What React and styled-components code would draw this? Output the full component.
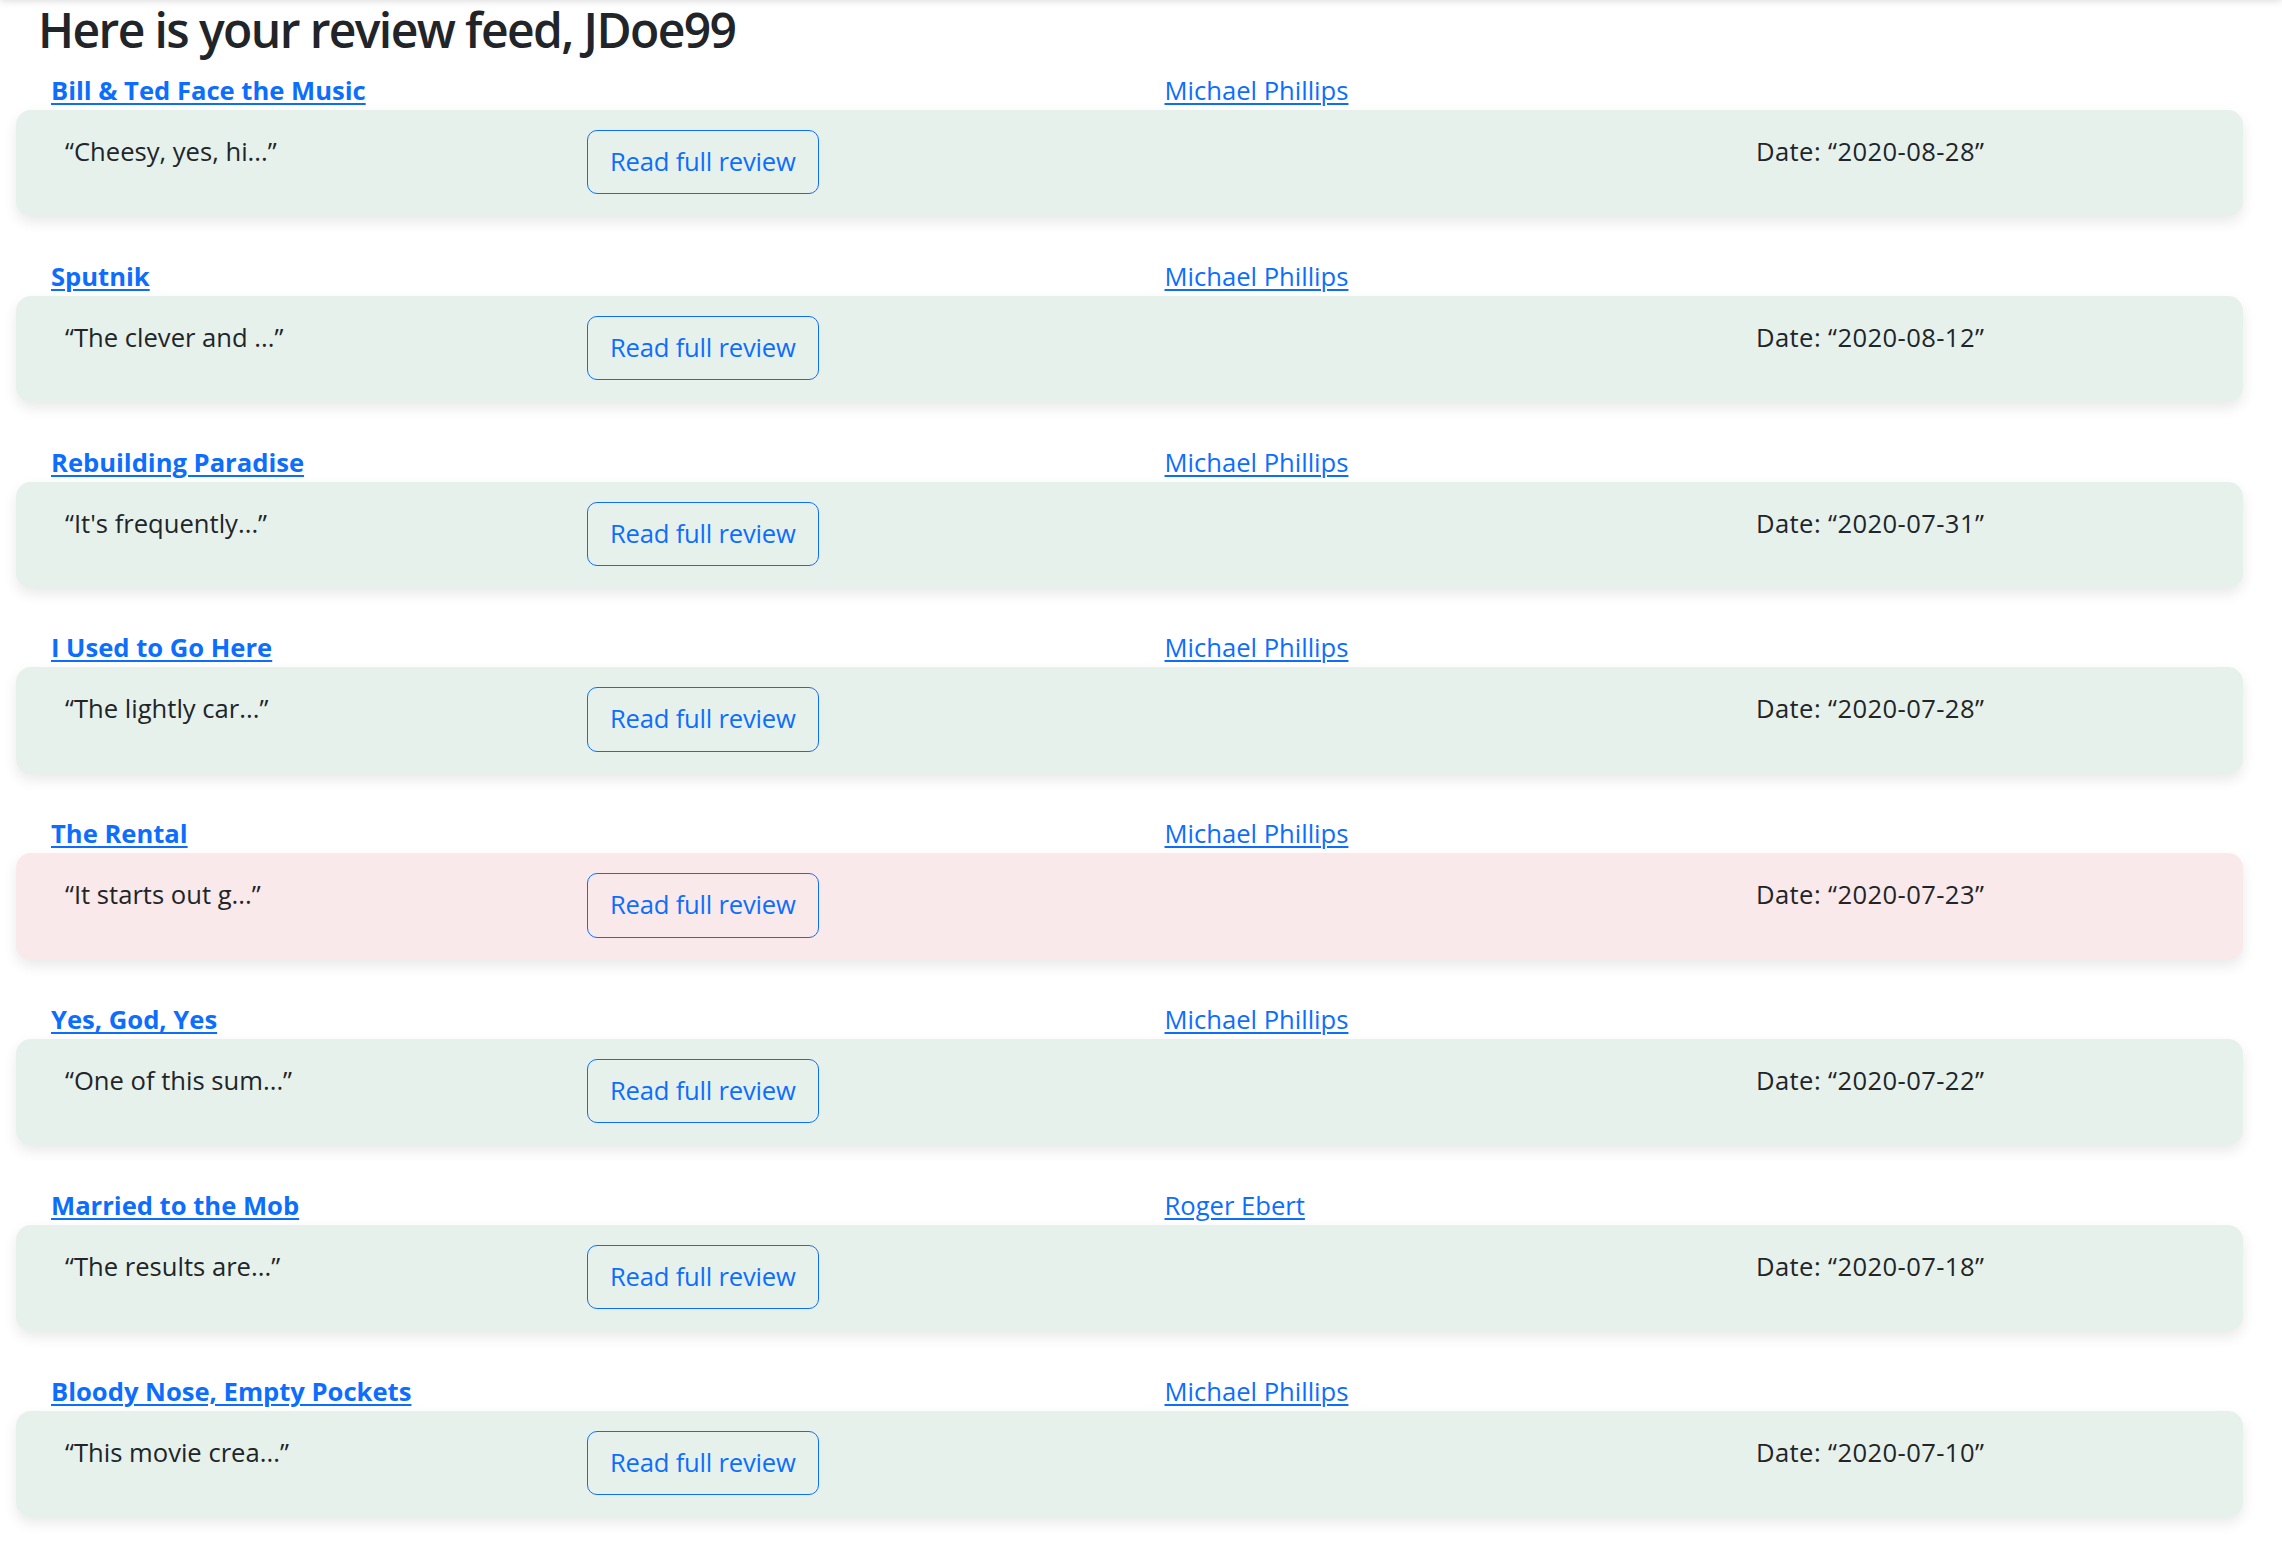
import React from 'react';
import styled, { createGlobalStyle } from 'styled-components';


const reviews = [
  { title: 'Bill & Ted Face the Music', critic: 'Michael Phillips', snippet: 'Cheesy, yes, hi...', date: '2020-08-28', fresh: true },
  { title: 'Sputnik', critic: 'Michael Phillips', snippet: 'The clever and ...', date: '2020-08-12', fresh: true },
  { title: 'Rebuilding Paradise', critic: 'Michael Phillips', snippet: "It's frequently...", date: '2020-07-31', fresh: true },
  { title: 'I Used to Go Here', critic: 'Michael Phillips', snippet: 'The lightly car...', date: '2020-07-28', fresh: true },
  { title: 'The Rental', critic: 'Michael Phillips', snippet: 'It starts out g...', date: '2020-07-23', fresh: false },
  { title: 'Yes, God, Yes', critic: 'Michael Phillips', snippet: 'One of this sum...', date: '2020-07-22', fresh: true },
  { title: 'Married to the Mob', critic: 'Roger Ebert', snippet: 'The results are...', date: '2020-07-18', fresh: true },
  { title: 'Bloody Nose, Empty Pockets', critic: 'Michael Phillips', snippet: 'This movie crea...', date: '2020-07-10', fresh: true },
];


const GlobalStyle = createGlobalStyle`
  body {
    margin: 0;
    background: #fff;
    color: #212529;
    font-family: "Open Sans", "Noto Sans", sans-serif;
  }
`;


const Page = styled.div`
  position: relative;
  padding: 0 39px 8px 16px;

  &::before {
    content: "";
    position: absolute;
    top: -10px;
    left: 0;
    right: 0;
    height: 10px;
    box-shadow: 0 0 8px rgba(0, 0, 0, 0.18);
  }
`;

const Heading = styled.h2`
  margin: 0 0 12px 22px;
  font-size: 48px;
  line-height: 59px;
  font-weight: 600;
  letter-spacing: -1.6px;
`;

const Entry = styled.section`
  margin-bottom: 40.4px;
`;

const EntryHeader = styled.div`
  display: grid;
  grid-template-columns: 1fr 1fr;
  column-gap: 70px;
  padding: 0 35px;
  height: 39px;
`;

const Link = styled.a`
  justify-self: start;
  color: #0d6efd;
  text-decoration: underline;
  text-decoration-thickness: ${(p) => (p.$bold ? '2px' : '1.5px')};
  text-underline-offset: 3px;
  font-size: 25.6px;
  line-height: 40px;
  font-weight: ${(p) => (p.$bold ? 700 : 400)};
  cursor: pointer;
`;

const Card = styled.div`
  display: grid;
  grid-template-columns: 522px 1169px 1fr;
  align-items: start;
  padding: 20px 0 22px 49px;
  border-radius: 15px;
  background: ${(p) => (p.$fresh ? '#e7f1ec' : '#f9e9ea')};
  box-shadow: 0 6px 14px rgba(0, 0, 0, 0.09);
`;

const CardText = styled.p`
  margin: 3px 0 0;
  font-size: 25.6px;
  line-height: 38.4px;
  letter-spacing: ${(p) => (p.$wide ? '0.4px' : '0')};
`;

const ReadButton = styled.button`
  justify-self: start;
  padding: 12px 22px;
  border: 1px solid #0d6efd;
  border-radius: 10px;
  background: transparent;
  color: #0d6efd;
  font-family: inherit;
  font-size: 25.6px;
  line-height: 38.4px;
  letter-spacing: -0.2px;
  cursor: pointer;
`;


const ReviewEntry = ({ review }) => {
  const { title, critic, snippet, date, fresh } = review;

  return (
    <Entry>
      <EntryHeader>
        <Link $bold>{title}</Link>
        <Link>{critic}</Link>
      </EntryHeader>
      <Card $fresh={fresh}>
        <CardText>“{snippet}”</CardText>
        <ReadButton>Read full review</ReadButton>
        <CardText $wide>Date: “{date}”</CardText>
      </Card>
    </Entry>
  );
};


const App = () => {
  return (
    <Page>
      <GlobalStyle />
      <Heading>Here is your review feed, JDoe99</Heading>
      {reviews.map((review, i) => (
        <ReviewEntry review={review} key={i} />
      ))}
    </Page>
  );
};


export default App;
